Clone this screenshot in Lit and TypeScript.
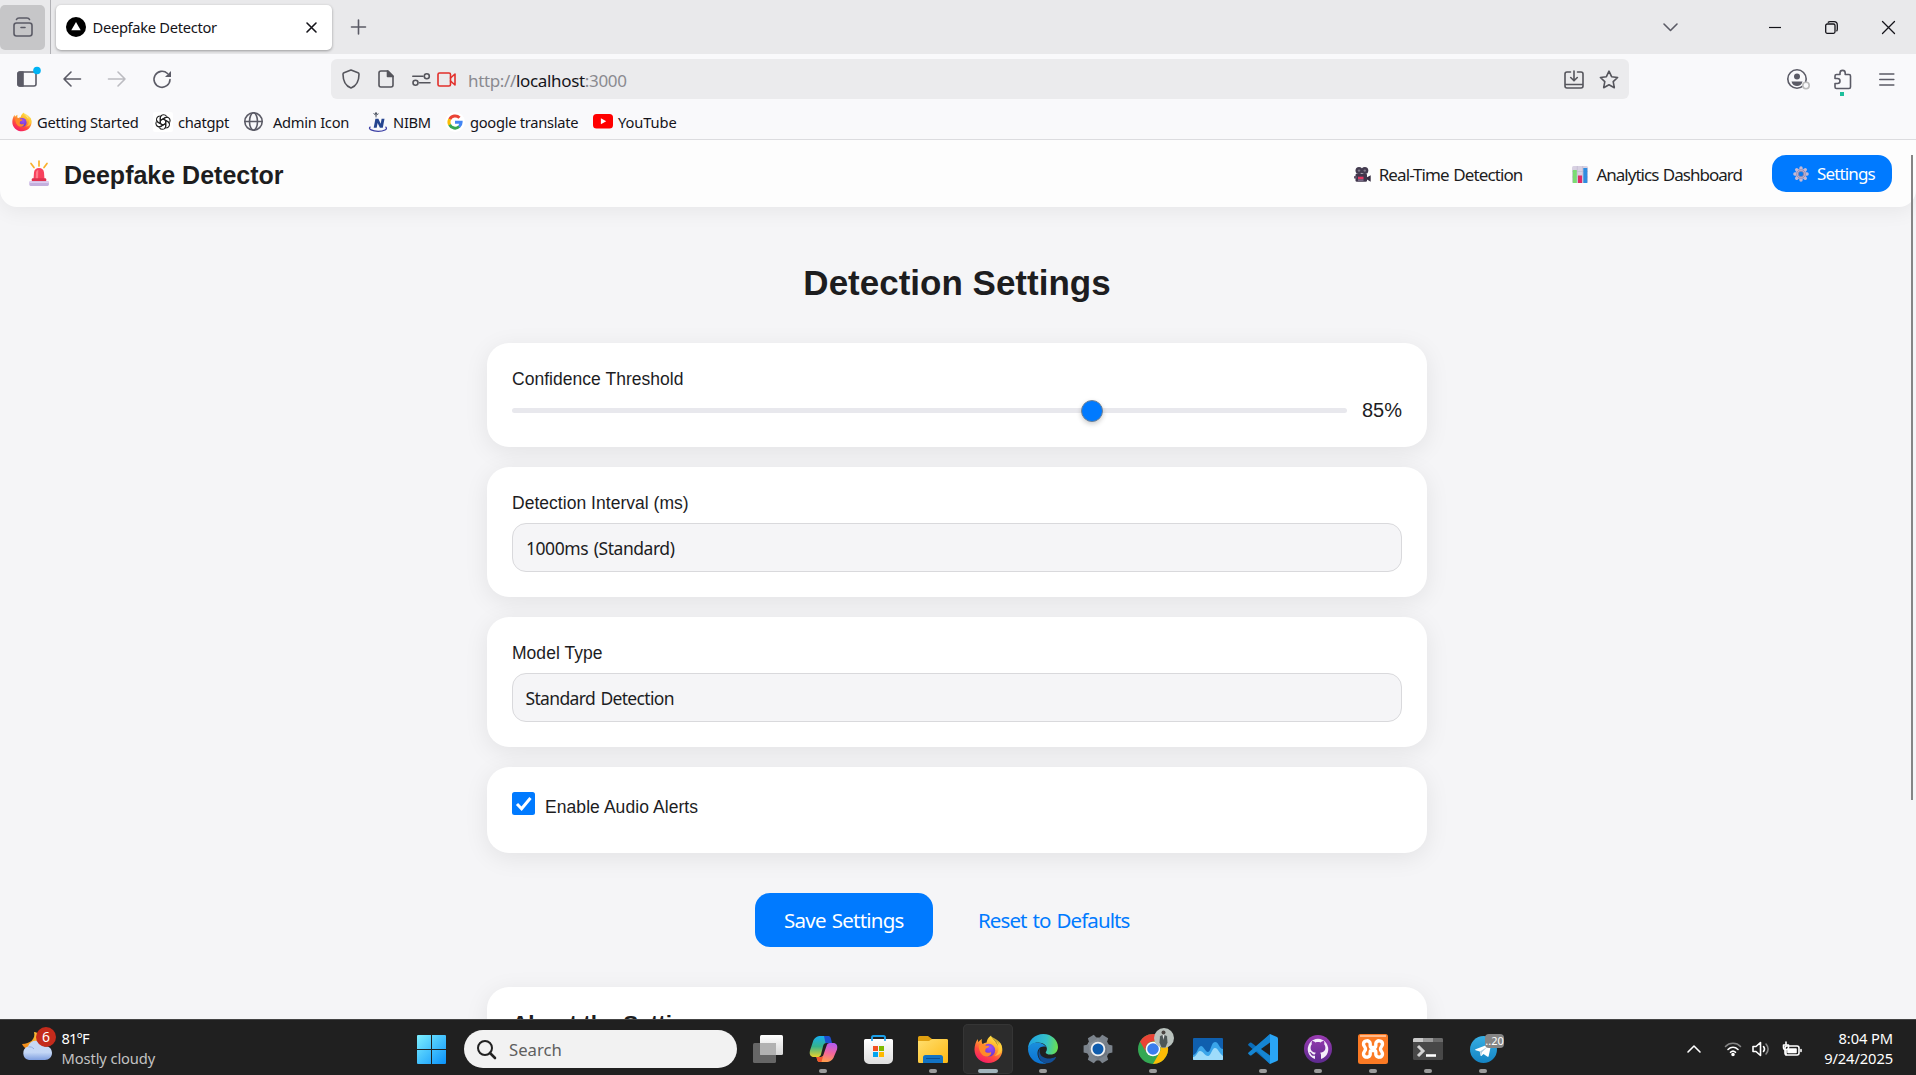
import { LitElement, html, css, svg, nothing, type TemplateResult } from "lit";
import { customElement, property } from "lit/decorators.js";

const line = (body: TemplateResult, w: number, h: number, cls = "") =>
  html`<svg class="ic ${cls}" width=${w} height=${h} viewBox="0 0 ${w} ${h}" fill="none" stroke="currentColor" stroke-width="1.6" stroke-linecap="round" stroke-linejoin="round">${body}</svg>`;

const art = (body: TemplateResult, w: number, h: number, box = `0 0 ${w} ${h}`) =>
  html`<svg class="ic" width=${w} height=${h} viewBox=${box}>${body}</svg>`;

const firefox = (size: number) => art(svg`
  <defs>
    <linearGradient id="ffb" x1=".8" y1="0" x2=".25" y2="1"><stop offset="0" stop-color="#fff44f"/><stop offset=".35" stop-color="#ffb02e"/><stop offset=".65" stop-color="#ff4f3d"/><stop offset="1" stop-color="#f5156c"/></linearGradient>
    <radialGradient id="ffp" cx=".6" cy=".3" r=".8"><stop offset="0" stop-color="#a04df5"/><stop offset="1" stop-color="#5b35c9"/></radialGradient>
  </defs>
  <path d="M27 11c-.6-1.600-1.900-3.400-2.900-4 .8 1.600 1.300 3.200 1.500 4.400C23.900 7.200 21 5.500 18.700 1.800c-.2-.4-.4-.8-.5-1.200-3.400 2-4.600 5.700-4.700 7.500-1.500.1-3 .7-4.200 1.600C8.400 9 7.800 6.200 8.600 4.200 6.600 5.100 5.500 6.500 4.700 7.500 4.200 6.800 4.200 4.600 4.200 4.200 1.900 6.700.5 11.500.5 15.500.5 24 7.300 30 15.500 30S30.300 23.700 30.300 16c0-3-1-6.500-3.300-8.200z" fill="url(#ffb)"/>
  <circle cx="15.800" cy="16.200" r="6.800" fill="url(#ffp)"/>
  <path d="M5 11c3-1.500 6.500-.5 8 .5 1.500-.2 2.600-.1 3.300.4-.5 1.800-2.400 1.900-3.600 2.600-.5.600-.3 2-.8 2.800 1 2 4.300 2.300 6.200.8 1 1.800-1 4.900-4.500 4.900C9 23 5 18 5 11z" fill="#ff8a2a"/>
  <path d="M18.700 1.800C21 5.500 25 8 26 12.500c1.200 5-1.800 9-5 10 6-.4 9-4 9-8.500 0-5-4-9-11.300-12.200z" fill="#ffd23c" opacity=".75"/>
`, size, size, "0 0 31 31");

const siren = art(svg`
  <path d="M10 0v5M2 2.500l3 4M18 2.500l-3 4" stroke="#f9b12c" stroke-width="1.700" stroke-linecap="round"/>
  <path d="M4.300 21 5 11.500C5.200 8.600 7.200 7 10 7s4.800 1.600 5 4.500l.7 9.500z" fill="#f8415c"/>
  <path d="M6.500 20 7 11.800c.1-1.600.9-2.500 2.300-2.700L9 20z" fill="#ff7c8b"/>
  <rect x="2.800" y="17.300" width="14.400" height="3.600" rx="1" fill="#e0304e"/>
  <rect x=".3" y="20.300" width="19.600" height="4.600" rx="1.300" fill="#c3b0de"/>
  <rect x=".3" y="20.300" width="19.600" height="1.800" rx=".9" fill="#dccdf0"/>
`, 20, 25);

const camera = art(svg`
  <circle cx="5" cy="3.600" r="3.500" fill="#433b4f"/><circle cx="10.800" cy="3.600" r="3.500" fill="#433b4f"/>
  <circle cx="5" cy="3.600" r="1.200" fill="#807889"/><circle cx="10.800" cy="3.600" r="1.200" fill="#807889"/>
  <rect x="1.500" y="6.800" width="11.500" height="8" rx="1.300" fill="#40364c"/>
  <rect x="0" y="9" width="3" height="2.500" rx=".6" fill="#5d5368"/>
  <path d="m13 10.300 3.700-2v6.400L13 12.500z" fill="#362d42"/>
  <rect x="4" y="9.700" width="5.500" height="2.500" fill="#e33a64"/><rect x="4" y="12.600" width="5.500" height="1" fill="#9b8fae"/>
`, 17, 15);

const chart = art(svg`
  <rect width="16" height="17" rx="1.600" fill="#d8d1e2"/>
  <path d="M0 5.500h16M0 11h16M5.300 0v17M10.700 0v17" stroke="#c2b9d0" stroke-width=".7"/>
  <rect x=".8" y="4" width="4" height="13" fill="#7bdc72"/><rect x="6" y="9.500" width="4" height="7.500" fill="#e02b67"/><rect x="11.300" y="2" width="4" height="15" fill="#2f8de0"/>
`, 16, 17);

const gear = art(svg`
  <g stroke="#c4b9d4" stroke-width="3.400" stroke-linecap="round"><path d="M8 1.900v12.200M1.900 8h12.200M3.700 3.700l8.600 8.600M12.300 3.700l-8.600 8.600"/></g>
  <circle cx="8" cy="8" r="4.300" fill="#c4b9d4" stroke="#9a8db3"/>
  <circle cx="8" cy="8" r="2.700" fill="#087bf2" stroke="#8f82a8" stroke-width=".8"/>
`, 16, 16);

const openai = art(svg`
  <rect width="20" height="20" rx="2" fill="#fff"/>
  <g fill="none" stroke="#222" stroke-width="1.100" stroke-linejoin="round">
    ${[0, 60, 120, 180, 240, 300].map(a => svg`<path transform="rotate(${a} 10 10)" d="M7.300 11.500V6.100c0-2 1.500-3.400 3.300-3.400 1.300 0 2.300.6 2.900 1.600M7.300 8.400l4.700-2.700c1-.6 2.200-.7 3.200-.2"/>`)}
  </g>
`, 20, 20);

const nibm = art(svg`
  <path d="M2.500 14.800C-1 17 5 19.300 10.200 19.300s10.500-2 7.300-4.500" fill="none" stroke="#3c3fa5" stroke-width="1.300"/>
  <path d="m5.700 15.800 1.700-9h3l2.300 4.900.9-4.900h2.900l-1.700 9h-2.900L9.600 11l-.9 4.800z" fill="#26458f"/>
  <path d="M5.500 1.500 8 3.200l2.500-1.500M8 3.200v2.200" stroke="#4e5562" fill="none"/><circle cx="8" cy="1.400" r="1.100" fill="#4e5562"/>
`, 19, 20);

const google = art(svg`
  <circle cx="10" cy="10" r="10" fill="#fff"/>
  <g fill="none" stroke-width="3">
    <path d="M14.500 5.800A6.100 6.100 0 0 0 4.700 7.300" stroke="#ea4335"/>
    <path d="M4.700 7.100a6.100 6.100 0 0 0 0 5.800" stroke="#fbbc05"/>
    <path d="M4.600 12.800a6.100 6.100 0 0 0 9.600 1.700" stroke="#34a853"/>
    <path d="M10 10.200h6.100c0 1.900-.6 3.300-2 4.400" stroke="#4285f4"/>
  </g>
`, 20, 20);

const youtube = art(svg`<rect width="20" height="14.500" rx="3.500" fill="#f00"/><path d="m7.900 4.200 5.300 3-5.300 3z" fill="#fff"/>`, 20, 14.5);

/* Taskbar artwork */
const winLogo = art(svg`
  <defs><linearGradient id="wl" gradientUnits="userSpaceOnUse" x1="0" y1="0" x2="29" y2="29"><stop offset="0" stop-color="#7df0ff"/><stop offset="1" stop-color="#0a92fb"/></linearGradient></defs>
  <path fill="url(#wl)" d="M1 0h13v14H0V1a1 1 0 0 1 1-1zM15 0h13a1 1 0 0 1 1 1v13H15zM0 15h14v14H1a1 1 0 0 1-1-1zM15 15h14v13a1 1 0 0 1-1 1H15z"/>`, 29, 29);

const weather = art(svg`
  <defs><linearGradient id="cl" x1="0" y1="0" x2="0" y2="1"><stop offset="0" stop-color="#c8d8f4"/><stop offset=".6" stop-color="#c4d7f6"/><stop offset="1" stop-color="#7f9fe0"/></linearGradient>
  <linearGradient id="mn" x1="1" y1="0" x2="0" y2="1"><stop offset="0" stop-color="#fbc63c"/><stop offset="1" stop-color="#f07f13"/></linearGradient></defs>
  <path d="M12 2C14 9 8 14 0 14c2 5 9 8 14 5s6-10 3-14c-1-2-3-3-5-3z" fill="url(#mn)"/>
  <path d="M7 30a7 7 0 0 1-1-13.500 8.500 8.500 0 0 1 16 0c5-1 8 2.500 8 6.500s-3 7-7 7z" fill="url(#cl)"/>
  <path d="M6.500 17c2-.5 4 .2 5.500 2" stroke="#94aee3" fill="none"/>`, 30, 31);

const taskView = art(svg`
  <defs><linearGradient id="tv" x1="0" y1="0" x2="0" y2="1"><stop offset="0" stop-color="#fff"/><stop offset="1" stop-color="#d5d5d5"/></linearGradient></defs>
  <rect y="8" width="23" height="20" rx="1.500" fill="#666"/><rect x="7" width="23" height="20" rx="1.500" fill="url(#tv)"/><path d="M7 8h16v12H8.500A1.500 1.500 0 0 1 7 18.500z" fill="#b2b2b2"/>`, 30, 28);

const copilot = art(svg`
  <defs>
    <linearGradient id="ca" x1=".3" y1="0" x2=".3" y2="1"><stop offset="0" stop-color="#17aef0"/><stop offset=".5" stop-color="#35b28c"/><stop offset="1" stop-color="#e9d22c"/></linearGradient>
    <linearGradient id="cb" x1=".6" y1="0" x2=".4" y2="1"><stop offset="0" stop-color="#b55bf0"/><stop offset=".5" stop-color="#f3669c"/><stop offset="1" stop-color="#ffa14a"/></linearGradient>
  </defs>
  <path d="M12 1h6c2 0 2.500 1 3 3l1 4h-4.500c-2 0-2.700.8-3.300 2.700L12 19.500c-.6 2-1.700 2.500-4 2.500H5c-3.500 0-5-2.500-4-6.500L4 6.500C5 3 8 1 12 1z" fill="url(#ca)"/>
  <path d="M15 1h4c2 0 2.600 1 3 3l1 4h-6.500z" fill="#1c4fd0"/>
  <path d="M17 27h-6c-2 0-2.600-1-3-3l-.6-2h4c2 0 2.700-.8 3.200-2.700L17.500 11c.5-2 1.400-3 3.500-3h3c3.500 0 5 2.500 4 6.500L25 21.500c-1 3.500-4 5.500-8 5.500z" fill="url(#cb)"/>
  <path d="M7.400 22h4c1.500 0 2.300-.5 2.800-1.500L12.500 27H11c-2 0-2.600-1-3-3z" fill="#f2552c"/>`, 29, 28);

const store = art(svg`
  <defs><linearGradient id="st" x1="0" y1="0" x2="0" y2="1"><stop offset="0" stop-color="#fff"/><stop offset="1" stop-color="#dedede"/></linearGradient></defs>
  <path d="M8 6V2.500A1.500 1.500 0 0 1 9.500 1h10A1.500 1.500 0 0 1 21 2.500V6" stroke="#1c9fe8" stroke-width="2" fill="none"/>
  <path d="M0 5.500A1.500 1.500 0 0 1 1.500 4h26A1.500 1.500 0 0 1 29 5.500V24a5 5 0 0 1-5 5H5a5 5 0 0 1-5-5z" fill="url(#st)"/>
  <path d="M8 4v2M21 4v2" stroke="#1c9fe8" stroke-width="1.600"/>
  <path fill="#f25022" d="M9 11h5v5H9z"/><path fill="#7fba00" d="M15 11h5v5h-5z"/><path fill="#00a4ef" d="M9 17h5v5H9z"/><path fill="#ffb900" d="M15 17h5v5h-5z"/>`, 29, 29);

const explorer = art(svg`
  <defs><linearGradient id="ex" x1="0" y1="0" x2="1" y2="1"><stop offset="0" stop-color="#ffdf6f"/><stop offset="1" stop-color="#fdb813"/></linearGradient></defs>
  <path d="M0 1.500A1.500 1.500 0 0 1 1.500 0H10l4 3H28.500A1.500 1.500 0 0 1 30 4.500V12H0z" fill="#e0a010"/>
  <path d="M0 5h11l3-2h14.500A1.500 1.500 0 0 1 30 4.500v21a1.500 1.500 0 0 1-1.500 1.500h-27A1.500 1.500 0 0 1 0 25.500z" fill="url(#ex)"/>
  <path d="M5 27v-5.500A2.500 2.500 0 0 1 7.500 19h15a2.500 2.500 0 0 1 2.500 2.500V27z" fill="#1273c4"/><path d="M8.500 22.500h13" stroke="#0b4e94" stroke-width="1.200" stroke-linecap="round"/>`, 30, 27);

const edge = art(svg`
  <defs>
    <linearGradient id="e1" x1="0" y1=".4" x2="1" y2=".5"><stop offset="0" stop-color="#1ea2e4"/><stop offset=".6" stop-color="#35c1c9"/><stop offset="1" stop-color="#6be04e"/></linearGradient>
    <linearGradient id="e2" x1="0" y1="0" x2="0" y2="1"><stop offset="0" stop-color="#1b8fdc"/><stop offset="1" stop-color="#0b72d2"/></linearGradient>
  </defs>
  <path d="M0 15C0 6.500 7 0 15.300 0 24 0 30 6.500 30 13c0 4.500-3.300 7.600-7.500 7.600-3.500 0-4.800-1.300-4.800-2.100 0-.9 1.200-1.400 1.200-3.800C18.900 11.400 15 8.500 10 8.500 5.500 8.500 1.500 11 0 15z" fill="url(#e1)"/>
  <path d="M0 15c.8-4.500 5-6.700 9.500-6.500 4 .2 7.500 2.500 8.600 4.500-5-1.500-8.600 1.500-8.600 6.500 0 5 4 9.500 9.500 9.700C8.500 32 0 24 0 15z" fill="url(#e2)"/>
  <path d="M12 14.500c-3.500 4-1.500 14.700 7.500 14.700 3.500 0 7-2.700 8.500-5.700.2-.5-.2-.8-.7-.5-6 3-15 1.500-15.600-5.300-.1-1.200 0-2.200.3-3.200z" fill="#134f96"/>`, 30, 30);

const settings = art(svg`
  <defs><linearGradient id="sg" x1="0" y1="0" x2="1" y2="1"><stop offset="0" stop-color="#929aa2"/><stop offset="1" stop-color="#626a74"/></linearGradient></defs>
  <g fill="#7b838c"><circle cx="15" cy="15" r="11.500" fill="url(#sg)"/>
  ${[0, 60, 120, 180, 240, 300].map(a => svg`<path transform="rotate(${a + 30} 15 15)" d="M10.300 6 11.600.6h6.800L19.700 6z"/>`)}</g>
  <circle cx="15" cy="15" r="6.400" fill="#0f5cad" stroke="#f1f1f1" stroke-width="1.800"/>`, 30, 30);

const chrome = art(svg`
  <circle cx="15" cy="15" r="15" fill="#34a853"/>
  <path d="M2 7.500A15 15 0 0 1 28 7.500H15a7.500 7.500 0 0 0-6.500 11.200z" fill="#ea4335"/>
  <path d="M28 7.500A15 15 0 0 1 15 30l6.500-11.300A7.500 7.500 0 0 0 21.500 11.300L15 7.500z" fill="#fbbc05"/>
  <circle cx="15" cy="15" r="7.300" fill="#fff"/><circle cx="15" cy="15" r="5.800" fill="#3b7ded"/>`, 30, 30);

const monitor = art(svg`
  <rect width="30" height="22" rx="1" fill="#0f5fae"/><path d="M0 17c4 0 5-9 8-9s4 6 7 6 3-10 7-10 4 7 8 7v10a1 1 0 0 1-1 1H1a1 1 0 0 1-1-1z" fill="#3aa5ea"/>
  <path d="M0 19c4 0 4-6 7-6s5 5 8 5 4-8 7-8 4 5 8 8v3a1 1 0 0 1-1 1H1a1 1 0 0 1-1-1z" fill="#9edcfb"/>`, 30, 22);

const vscode = art(svg`
  <path d="M22 0 9 13 3.500 8.700a1.500 1.500 0 0 0-1.700 0L.5 10a1 1 0 0 0 0 1.600L22 30z" fill="#0a6cb8"/>
  <path d="M22 30 9 17l-5.500 4.300a1.500 1.500 0 0 1-1.700 0L.5 20a1 1 0 0 1 0-1.600L22 0z" fill="#1585d2"/>
  <path d="M22 0l7 3a1.800 1.800 0 0 1 1 1.600v20.800a1.800 1.800 0 0 1-1 1.600l-7 3z" fill="#2aa5f5"/><path d="M22 8.500v13L13 15z" fill="#202020"/>`, 30, 30);

const github = art(svg`
  <defs><linearGradient id="gh" x1="0" y1="0" x2="0" y2="1"><stop offset="0" stop-color="#9a3bb2"/><stop offset="1" stop-color="#5d2a8e"/></linearGradient></defs>
  <circle cx="14" cy="14" r="14" fill="url(#gh)"/>
  <path d="M11 24v-3.300c-2.600.5-3.800-.8-4.300-2-.2-.5-.8-1.200-1.300-1.500 1.500-.5 2.300.9 2.900 1.600.8 1 1.900.9 2.800.5.100-.7.400-1.200.8-1.500-3.300-.4-5.300-1.800-5.300-5.300 0-1.300.4-2.300 1.200-3.200-.3-1-.2-2.300.2-3.200 1.300-.1 2.400.6 3.400 1.300 1.700-.5 3.500-.5 5.200 0 1-.7 2.100-1.400 3.400-1.300.4.900.5 2.200.2 3.200.8.900 1.200 1.900 1.200 3.200 0 3.500-2 4.900-5.300 5.300.6.500.9 1.300.9 2.300V24a10.300 10.300 0 1 0-6 0z" fill="#f4eefa" fill-rule="evenodd"/>`, 28, 28);

const lobes = "M15.200 13.500h-1.700c-1 0-1.300-.8-1.300-2V9.800c0-4-6.700-4-6.700.2 0 2.300 2 2.900 2 5s-2 2.700-2 5c0 4.200 6.700 4.200 6.700.2v-1.700c0-1.200.3-2 1.300-2h1.700";
const xampp = art(svg`
  <rect width="30" height="30" rx="2.500" fill="#fb7a24"/><rect x="2" y="1" width="26" height="2" fill="#ffb98a"/>
  <g fill="none" stroke="#fff" stroke-width="3.400" stroke-linejoin="round"><path d=${lobes}/><path d=${lobes} transform="matrix(-1 0 0 1 30 0)"/></g>`, 30, 30);

const terminal = art(svg`
  <rect width="30" height="22" rx="1.500" fill="#484848"/><path d="M0 4V1.500A1.500 1.500 0 0 1 1.500 0H10v4z" fill="#c9c9c9"/><path d="M10 0h10v4H10z" fill="#9a9a9a"/><path d="M20 0h8.500A1.500 1.500 0 0 1 30 1.500V4H20z" fill="#6b6b6b"/>
  <path d="m5 8 5 5-5 5" fill="none" stroke="#d2d2d2" stroke-width="3"/><path d="M13 17.500h10" stroke="#fff" stroke-width="2.600"/>`, 30, 22);

const telegram = art(svg`
  <defs><linearGradient id="tg" x1="0" y1="0" x2="0" y2="1"><stop offset="0" stop-color="#37aee2"/><stop offset="1" stop-color="#1484c4"/></linearGradient></defs>
  <circle cx="13.500" cy="13.500" r="13.500" fill="url(#tg)"/><path d="m5.500 13.300 14.500-5.600c.8-.3 1.300.2 1.100 1L18.700 20c-.2.900-.8 1-1.500.6l-3.700-2.700-1.900 1.800c-.5.400-.9.300-1-.3l-.8-3.900-4.200-1.300c-.6-.2-.6-.6-.1-.9z" fill="#fff"/><path d="m10 15.400 7.500-4.700-5.600 5.500-.7 3z" fill="#a9c9dd"/>`, 27, 27);

/* One taskbar button with its running indicator. */
@customElement("task-item")
export class TaskItem extends LitElement {
  static styles = css`
    :host { display: flex; width: 55px; height: 56px; justify-content: center; flex: none; }
    .tile { position: relative; box-sizing: border-box; width: 50px; height: 50px; margin-top: 5px; display: flex; align-items: center; justify-content: center; border-radius: 5px; }
    .active { background: #2c2c2c; box-shadow: inset 0 0 0 1px #353535; }
    .mark { position: absolute; bottom: 1px; left: 21px; width: 8px; height: 4px; border-radius: 2px; background: #9b9b9b; }
    .active .mark { left: 15px; width: 20px; background: #a4b5bd; }
  `;
  @property({ type: Boolean }) active = false;
  @property({ type: Boolean }) running = false;
  render() {
    return html`<div class="tile ${this.active ? "active" : ""}"><slot></slot>${this.running || this.active ? html`<i class="mark"></i>` : nothing}</div>`;
  }
}

@customElement("setting-card")
export class SettingCard extends LitElement {
  static styles = css`
    :host { display: block; box-sizing: border-box; background: #fff; border-radius: 22px; padding: 25px; box-shadow: 0 5px 25px rgba(0, 0, 0, 0.08); }
    .label { font-size: 17.5px; letter-spacing: 0.03px; line-height: 21px; padding-top: 0.6px; height: 20.4px; margin-bottom: 10px; }
  `;
  @property() label = "";
  render() {
    return html`${this.label ? html`<div class="label">${this.label}</div>` : nothing}<slot></slot>`;
  }
}

@customElement("app-root")
export class AppRoot extends LitElement {
  static styles = css`
    :host { display: flex; flex-direction: column; width: 1916px; height: 1075px; overflow: hidden; position: relative; background: #f5f5f7; color: #1d1d1f; font-family: "Liberation Sans", Arial, sans-serif; }
    .ic { display: block; flex: none; overflow: visible; }
    .row { display: flex; align-items: center; }
    .ui { font-family: "Noto Sans", sans-serif; font-size: 14.7px; white-space: nowrap; color: #15141a; }

    .tabs { height: 54px; background: #e9e9eb; color: #5b5b66; flex: none; }
    .view { width: 45px; height: 45px; background: #c6c6c8; border-radius: 5px; justify-content: center; }
    .divider { width: 1px; height: 54px; margin-left: 5px; background: #b1b1b5; }
    .tab { box-sizing: border-box; width: 276px; height: 45px; margin-left: 5px; padding: 0 15px 0 10px; background: #fff; border-radius: 5px; box-shadow: 0 1px 3px rgba(0, 0, 0, 0.35); }
    .tab .name { margin-left: 6.5px; flex: 1; color: #15141a; letter-spacing: -0.3px; }
    .plus { margin-left: 19px; }
    .win { margin-left: auto; margin-right: 21px; color: #15141a; }
    .chev { color: #5b5b66; margin-right: 90.5px; }
    .restore { margin: 0 44px 0 44.5px; }

    .tools { height: 50px; background: #f9f9fb; color: #5b5b66; flex: none; }
    .side { margin-left: 17px; }
    .back { margin-left: 26px; } .fwd { margin-left: 27px; color: #bcbcc1; } .reload { margin-left: 27px; }
    .url { box-sizing: border-box; width: 1298px; height: 40px; margin-left: 160px; background: #ebebed; border-radius: 6px; padding: 0 10px 0 11px; color: #55555c; }
    .doc, .perm { margin-left: 18px; } .cam { margin-left: 7px; } .star { margin-left: 15px; }
    .addr { font-size: 17px; letter-spacing: -0.34px; color: #8a8a90; margin-left: 12px; flex: 1; padding-top: 2px; }
    .addr b { font-weight: 400; color: #15141a; }
    .acct { margin-left: 158px; } .ext { margin-left: 24px; } .menu { margin-left: 28px; }
    .red { color: #e22f2a; }

    .marks { height: 35px; background: #f9f9fb; border-bottom: 1px solid #dcdcdf; flex: none; padding-left: 12px; letter-spacing: -0.28px; }
    .bm { gap: 5px; }
    .b0 { width: 141px; } .b1 { width: 91px; } .b2 { width: 123.5px; gap: 10px; } .b3 { width: 77.5px; gap: 6.5px; } .b4 { width: 148px; } .b5 { letter-spacing: -0.1px; }
    .globe { color: #5b5b66; }

    .page { flex: 1; min-height: 0; overflow: hidden; display: flex; flex-direction: column; align-items: center; }
    .nav { box-sizing: border-box; width: 100%; height: 67px; flex: none; background: #fdfdfd; border-radius: 0 0 17px 17px; padding: 0 24px 0 29px; box-shadow: 0 5px 20px rgba(0, 0, 0, 0.06); }
    .brand { font-size: 25px; font-weight: 700; margin-left: 15px; flex: 1; padding-top: 3px; }
    .link { font-family: "Noto Sans", sans-serif; font-size: 17px; letter-spacing: -0.9px; word-spacing: 1px; white-space: nowrap; height: 37px; display: flex; align-items: center; gap: 8px; padding-top: 1px; }
    .link + .link { margin-left: 50px; }
    .link.dash { letter-spacing: -0.98px; }
    .link.on { box-sizing: border-box; margin: 0 0 1px 30px; padding: 1px 0 0 21px; width: 120px; letter-spacing: -0.85px; background: #007aff; color: #fff; border-radius: 14px; }
    .col { width: 940px; margin-right: 2px; display: flex; flex-direction: column; gap: 20px; }
    h1 { font-size: 35px; line-height: 40px; margin: 56px 0 20px; text-align: center; }

    .slide { display: flex; align-items: center; height: 23px; gap: 15px; font-size: 20px; line-height: 24px; }
    .track { position: relative; width: 835px; height: 5px; border-radius: 3px; background: #e8e8ed; }
    .thumb { position: absolute; top: -8px; box-sizing: border-box; width: 22px; height: 22px; margin-left: -11px; border-radius: 50%; background: #007aff; border: 1px solid #6f8296; box-shadow: 0 2px 5px rgba(0, 0, 0, 0.2); }
    .select { box-sizing: border-box; height: 49px; border: 1px solid #d9d9dc; border-radius: 14px; background: #f5f5f7; padding-left: 13px; font-family: "Noto Sans", sans-serif; font-size: 17.5px; letter-spacing: -0.45px; word-spacing: 1.5px; line-height: 49px; }
    .tight { letter-spacing: -0.66px; padding-left: 12.5px; }
    .check { display: flex; height: 36px; gap: 10px; font-size: 17.5px; letter-spacing: 0.07px; line-height: 31px; }
    .box { width: 23px; height: 23px; border-radius: 2.5px; background: #007aff; }
    .actions { display: flex; justify-content: center; gap: 16px; margin: 20px 0; height: 54px; }
    .btn { box-sizing: border-box; height: 54px; padding: 0 0 0 29px; width: 210px; border-radius: 15px; font-family: "Noto Sans", sans-serif; font-size: 20.5px; letter-spacing: -0.9px; word-spacing: 1.5px; line-height: 54px; color: #007aff; white-space: nowrap; }
    .save { width: 178px; background: #007aff; color: #fff; letter-spacing: -0.76px; }
    .about { height: 200px; }
    h2 { margin: 0; font-size: 22.5px; line-height: 24px; }
    .scroll { position: absolute; left: 1911px; top: 155px; width: 2px; height: 645px; background: #858585; }

    .task { box-sizing: border-box; height: 56px; background: #202020; border-top: 1px solid #444; flex: none; color: #fff; align-items: flex-start; position: relative; }
    .task .ui { color: #fff; }
    .wx { margin: 7px 0 0 22px; width: 31px; position: relative; padding-top: 3px; }
    .six { position: absolute; left: 14px; top: 0; width: 20px; height: 20px; border-radius: 50%; background: #c42b1c; text-align: center; line-height: 20px; font-size: 14px; }
    .stack { margin: 8px 0 0 8.5px; width: 355.5px; line-height: 20px; letter-spacing: -0.1px; }
    .stack .temp { letter-spacing: -0.9px; }
    .stack .dim { color: #c3c3c3; }
    .start { margin: 15px 0 0 0; }
    .find { box-sizing: border-box; width: 273px; height: 38px; margin: 10px 0 0 18px; border-radius: 19px; background: #f2f2f2; padding-left: 13px; color: #222; }
    .task .find .ui { color: #5f5f5f; font-size: 16.7px; margin-left: 13px; }
    .apps { display: flex; margin-left: 3.5px; margin-top: -1px; }
    .face { position: absolute; left: 26px; top: 4px; width: 20px; height: 20px; }
    .badge { position: absolute; left: 27px; top: 10px; width: 19px; height: 14px; background: #858585; border-radius: 4px; color: #fff; font: 11px/14px "Noto Sans", sans-serif; text-align: center; }
    .tray { margin-left: auto; height: 54px; gap: 10px; }
    .tray .ic { margin-top: 4px; }
    .tray .up { margin-right: 13px; }
    .tray .snd { margin-right: 2px; }
    .clock { text-align: right; width: 72px; margin: 0 23px 0 9px; line-height: 20px; padding-top: 2px; letter-spacing: -0.1px; }
  `;

  private tabs() {
    return html`<div class="ui"><div class="tabs row">
      <div class="view row">${line(svg`<rect x="1" y="6" width="18" height="13" rx="2.500"/><path d="M3.500 2.500C4 1.300 5 1 6 1h8c1 0 2 .3 2.500 1.500M8 10.500h4"/>`, 20, 20)}</div>
      <div class="divider"></div>
      <div class="tab row">
        ${art(svg`<circle cx="10" cy="10" r="10" fill="#000"/><path d="M10 5 14.700 13.300H5.300z" fill="#fff"/>`, 20, 20)}
        <span class="name">Deepfake Detector</span>
        ${line(svg`<path d="m1 1 9 9M10 1l-9 9" stroke="#15141a"/>`, 11, 11)}
      </div>
      <div class="plus">${line(svg`<path d="M7.500 1v14M.5 8h14"/>`, 15, 16)}</div>
      <div class="win row">
        ${line(svg`<path d="m1 1 6.500 6.500L14 1"/>`, 15, 9, "chev")}
        ${line(svg`<path d="M0 .5h12" stroke-width="1.200" stroke-linecap="butt"/>`, 12, 1)}
        ${line(svg`<g stroke-width="1.300"><rect x=".7" y="3" width="9.300" height="9.300" rx="1.500"/><path d="M3.200 1.200C3.700.8 4.200.7 5 .7h4c2 0 3.300 1.200 3.300 3.300v4c0 .8-.1 1.300-.5 1.800"/></g>`, 13, 13, "restore")}
        ${line(svg`<path d="m.5.5 12 12M12.500.5l-12 12" stroke-width="1.300"/>`, 13, 13)}
      </div>
    </div></div>`;
  }

  private tools() {
    return html`<div class="ui"><div class="tools row">
      ${line(svg`<rect x="1" y="3" width="18" height="14" rx="2"/><path d="M1 5a2 2 0 0 1 2-2h3v14H3a2 2 0 0 1-2-2z" fill="currentColor"/><circle cx="20" cy="1.500" r="3.800" fill="#00b3f4" stroke="none"/>`, 20, 20, "side")}
      ${line(svg`<path d="M17.500 8H1M8 1 1 8l7 7"/>`, 18, 16, "back")}
      ${line(svg`<path d="M.5 8H17M10 1l7 7-7 7"/>`, 18, 16, "fwd")}
      ${line(svg`<path d="M17 9.500a8 8 0 1 1-2.500-6"/><path d="M18 1v6h-6z" fill="currentColor" stroke="none"/>`, 18, 18, "reload")}
      <div class="url row">
        ${line(svg`<path d="M9 1 16 3.700c.8.3 1 .8 1 1.500C17 12 14 17 9 19 4 17 1 12 1 5.200c0-.7.2-1.200 1-1.500z"/>`, 18, 20)}
        ${line(svg`<path d="M3 1h7l5 5v9a2 2 0 0 1-2 2H3a2 2 0 0 1-2-2V3a2 2 0 0 1 2-2z"/><path d="M9.500 1v5.500H15z" fill="currentColor"/>`, 16, 18, "doc")}
        ${line(svg`<path d="M.8 3.300H11M7.500 9.700H18"/><circle cx="14.800" cy="3.300" r="2.500"/><circle cx="3.500" cy="9.700" r="2.500"/>`, 18, 13, "perm")}
        ${line(svg`<rect x="1" y="1" width="12.500" height="13" rx="1.500"/><path d="m13.500 6 4.500-4v11l-4.500-4"/>`, 19, 15, "red cam")}
        <span class="addr">http://<b>localhost</b>:3000</span>
        ${line(svg`<path d="M6.500 2H3a2 2 0 0 0-2 2v12a2 2 0 0 0 2 2h14a2 2 0 0 0 2-2V4a2 2 0 0 0-2-2h-3.500M1.500 14.500h17M10 1v9.500M6.700 7.500 10 10.800l3.300-3.300"/>`, 20, 19)}
        ${line(svg`<path d="m10 1.200 2.600 5.500 6 .8-4.400 4.200 1.100 6L10 14.800 4.700 17.700l1.100-6L1.400 7.500l6-.8z"/>`, 20, 19, "star")}
      </div>
      ${line(svg`<circle cx="10" cy="10" r="9.200"/><circle cx="10" cy="7.500" r="3" fill="currentColor" stroke="none"/><path d="M4.500 12.500h11c-.6 3-3 4.500-5.500 4.500s-4.900-1.500-5.500-4.500z" fill="currentColor" stroke="none"/><circle cx="19" cy="16.500" r="3.200" fill="#f9f9fb" stroke="#bbb"/>`, 23, 20, "acct")}
      ${line(svg`<path d="M1 8V7a1.500 1.500 0 0 1 1.500-1.500H6V4a2.600 2.600 0 0 1 5.200 0v1.500H15A1.500 1.500 0 0 1 16.500 7v11a1.500 1.500 0 0 1-1.500 1.500H2.500A1.500 1.500 0 0 1 1 18v-3.500h2.500a2.500 2.500 0 0 0 0-5H1z"/><rect x="6" y="23" width="4" height="4" fill="#1fbf9c" stroke="none"/>`, 17, 20, "ext")}
      ${line(svg`<path d="M.8 1h14M.8 6.500h14M.8 12h14"/>`, 16, 13, "menu")}
    </div></div>`;
  }

  private marks() {
    return html`<div class="marks row ui">
      <div class="bm row b0">${firefox(20)}<span>Getting Started</span></div>
      <div class="bm row b1">${openai}<span>chatgpt</span></div>
      <div class="bm row b2">${line(svg`<circle cx="9.500" cy="9.500" r="8.700"/><ellipse cx="9.500" cy="9.500" rx="4" ry="8.700"/><path d="M1 9.500h17"/>`, 19, 19, "globe")}<span>Admin Icon</span></div>
      <div class="bm row b3">${nibm}<span>NIBM</span></div>
      <div class="bm row b4">${google}<span>google translate</span></div>
      <div class="bm row b5">${youtube}<span>YouTube</span></div>
    </div>`;
  }

  private page() {
    const value = 85, min = 50, max = 100;
    const pos = 11 + ((value - min) / (max - min)) * 813;
    return html`<div class="page">
      <div class="nav row">
        ${siren}<div class="brand">Deepfake Detector</div>
        <div class="link">${camera}<span>Real-Time Detection</span></div>
        <div class="link dash">${chart}<span>Analytics Dashboard</span></div>
        <div class="link on">${gear}<span>Settings</span></div>
      </div>
      <div class="col">
        <h1>Detection Settings</h1>
        <setting-card label="Confidence Threshold">
          <div class="slide"><div class="track"><div class="thumb" style="left:${pos}px"></div></div><span>${value}%</span></div>
        </setting-card>
        <setting-card label="Detection Interval (ms)"><div class="select">1000ms (Standard)</div></setting-card>
        <setting-card label="Model Type"><div class="select tight">Standard Detection</div></setting-card>
        <setting-card><div class="check">
          <div class="box"><svg class="ic" width="23" height="23" viewBox="0 0 23 23"><path d="m5 12 4.600 4.700L18.500 6" fill="none" stroke="#fff" stroke-width="3"/></svg></div>
          <span>Enable Audio Alerts</span></div></setting-card>
        <div class="actions"><div class="btn save">Save Settings</div><div class="btn">Reset to Defaults</div></div>
        <setting-card class="about"><h2>About the Settings</h2></setting-card>
      </div>
    </div><div class="scroll"></div>`;
  }

  private taskbar() {
    return html`<div class="task row">
      <div class="wx">${weather}<div class="six ui">6</div></div>
      <div class="stack ui"><div class="temp">81°F</div><div class="dim">Mostly cloudy</div></div>
      <div class="start">${winLogo}</div>
      <div class="find row">${line(svg`<circle cx="8" cy="8" r="7" stroke-width="2"/><path d="m13 13 5 5" stroke-width="2.600"/>`, 19, 19)}<span class="ui">Search</span></div>
      <div class="apps">
        <task-item>${taskView}</task-item>
        <task-item running>${copilot}</task-item>
        <task-item>${store}</task-item>
        <task-item running>${explorer}</task-item>
        <task-item active>${firefox(29)}</task-item>
        <task-item running>${edge}</task-item>
        <task-item>${settings}</task-item>
        <task-item running>${chrome}<div class="face">${art(svg`<circle cx="10" cy="10" r="10" fill="#b9c2bd"/><circle cx="9.500" cy="4.500" r="2" fill="#4a4440"/><path d="M6 8.500c1-2 6-2 7 0l.5 6-2 5h-4l-2-5z" fill="#4d5757"/><path d="m8.500 7 1 5 1-5z" fill="#e3e3e3"/>`, 20, 20)}</div></task-item>
        <task-item>${monitor}</task-item>
        <task-item running>${vscode}</task-item>
        <task-item running>${github}</task-item>
        <task-item running>${xampp}</task-item>
        <task-item running>${terminal}</task-item>
        <task-item running>${telegram}<div class="badge">..20</div></task-item>
      </div>
      <div class="tray row">
        ${line(svg`<path d="m1 7 6-6 6 6"/>`, 14, 8, "up")}
        ${line(svg`<path d="M1.500 5.500c4-4.300 11-4.300 15 0" stroke="#858585"/><path d="M4 8.500c3-3 7-3 10 0M6.500 11.300c1.500-1.500 3.500-1.500 5 0"/><circle cx="9" cy="13.500" r="1" fill="#fff"/>`, 18, 16)}
        ${line(svg`<path d="M1 5.500h3L8.500 1.500v13L4 10.500H1z"/><path d="M11.500 5.500c1.200 1.500 1.200 3.500 0 5"/><path d="M14 3c2.500 3 2.500 7 0 10" stroke="#858585"/>`, 18, 16, "snd")}
        ${line(svg`<rect x="3" y="5" width="14" height="9" rx="2"/><path d="M6 8h8v3.500H6z" fill="#fff"/><path d="M19 8.500v2M4 1v3M1.500 4h5v2.500c0 3-5 3-5 0zM4 8.500V14"/>`, 20, 16)}
        <div class="clock ui"><div>8:04 PM</div><div>9/24/2025</div></div>
      </div>
    </div>`;
  }

  render() {
    return html`${this.tabs()}${this.tools()}${this.marks()}${this.page()}${this.taskbar()}`;
  }
}
